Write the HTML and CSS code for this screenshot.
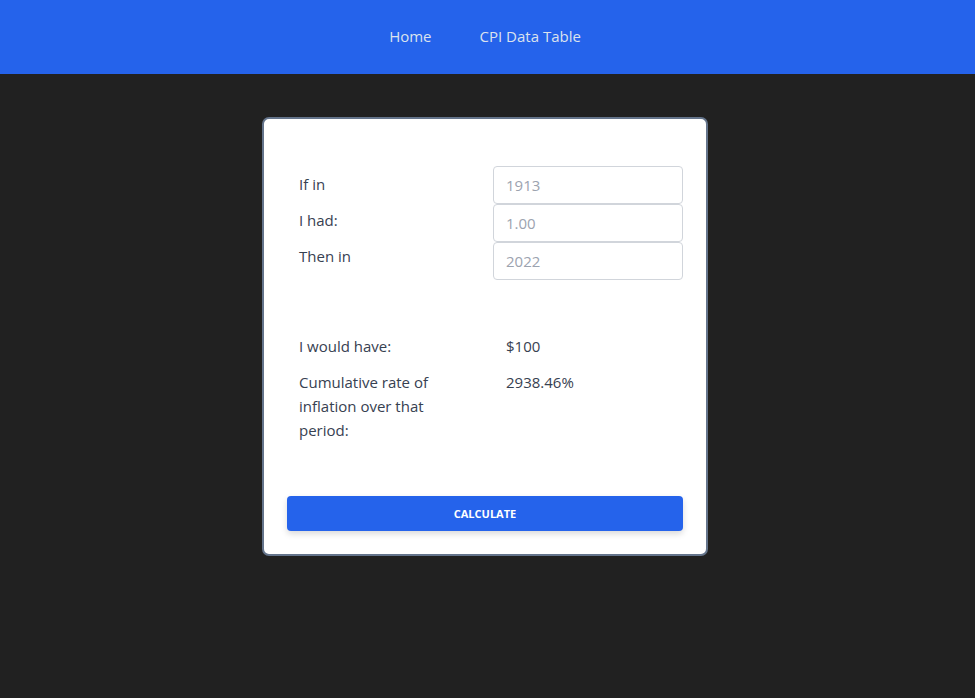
FILE: index.html
```html
<!DOCTYPE html>
<html>
<head>
<meta charset="utf-8">
<link rel="stylesheet" href="styles.css">
</head>
<body>
<header class="topbar">
  <nav class="nav">
    <a class="nav-link" href="#">Home</a>
    <a class="nav-link" href="#">CPI Data Table</a>
  </nav>
</header>
<main class="main">
  <section class="card">
    <div class="inputs">
      <div class="labels">
        <div class="label">If in</div>
        <div class="label">I had:</div>
        <div class="label">Then in</div>
      </div>
      <div class="fields">
        <input class="field" placeholder="1913">
        <input class="field" placeholder="1.00">
        <input class="field" placeholder="2022">
      </div>
    </div>
    <div class="results">
      <div class="result-row">
        <div class="result-label">I would have:</div>
        <div class="result-value">$100</div>
      </div>
      <div class="result-row">
        <div class="result-label">Cumulative rate of inflation over that period:</div>
        <div class="result-value">2938.46%</div>
      </div>
    </div>
    <button class="btn">CALCULATE</button>
  </section>
</main>
</body>
</html>
```
FILE: styles.css
```css
* { box-sizing: border-box; }
html, body { margin: 0; padding: 0; }
body {
  background: #212121;
  font-family: "Open Sans", "Noto Sans", sans-serif;
  font-size: 15px;
  color: #374151;
  min-height: 698px;
}
.topbar {
  background: #2563eb;
  height: 74px;
  display: flex;
  align-items: center;
  justify-content: center;
  padding-bottom: 2px;
}
.nav {
  display: flex;
  gap: 48px;
  margin-right: 5px;
}
.nav-link {
  color: #dbe2ee;
  text-decoration: none;
  font-size: 15px;
}
.main {
  display: flex;
  justify-content: center;
  padding-top: 43px;
}
.card {
  width: 446px;
  height: 439px;
  margin-left: -5px;
  background: #fff;
  border: 2px solid #64748b;
  border-radius: 7px;
  padding: 47px 23px 0 23px;
}
.inputs {
  display: flex;
}
.labels {
  width: 206px;
  padding-left: 12px;
  padding-top: 6px;
}
.label {
  line-height: 24px;
  height: 24px;
  margin-bottom: 12px;
}
.fields {
  flex: 1;
  display: flex;
  flex-direction: column;
}
.field {
  height: 38px;
  width: 100%;
  border: 1px solid #d1d5db;
  border-radius: 4px;
  padding: 0 12px;
  font-family: inherit;
  font-size: 15px;
  color: #374151;
  outline: none;
}
.field::placeholder { color: #9ca3af; }
.results {
  margin-top: 54px;
}
.result-row {
  display: flex;
  margin-bottom: 12px;
  line-height: 24px;
}
.result-label {
  width: 219px;
  padding-left: 12px;
  padding-right: 60px;
}
.result-value {
  flex: 1;
}
.btn {
  margin-top: 42px;
  width: 100%;
  height: 35px;
  background: #2563eb;
  color: #fff;
  border: none;
  border-radius: 4px;
  font-family: inherit;
  font-weight: 700;
  font-size: 11px;
  letter-spacing: 0;
  box-shadow: 0 3px 6px rgba(0,0,0,0.15);
}
```
